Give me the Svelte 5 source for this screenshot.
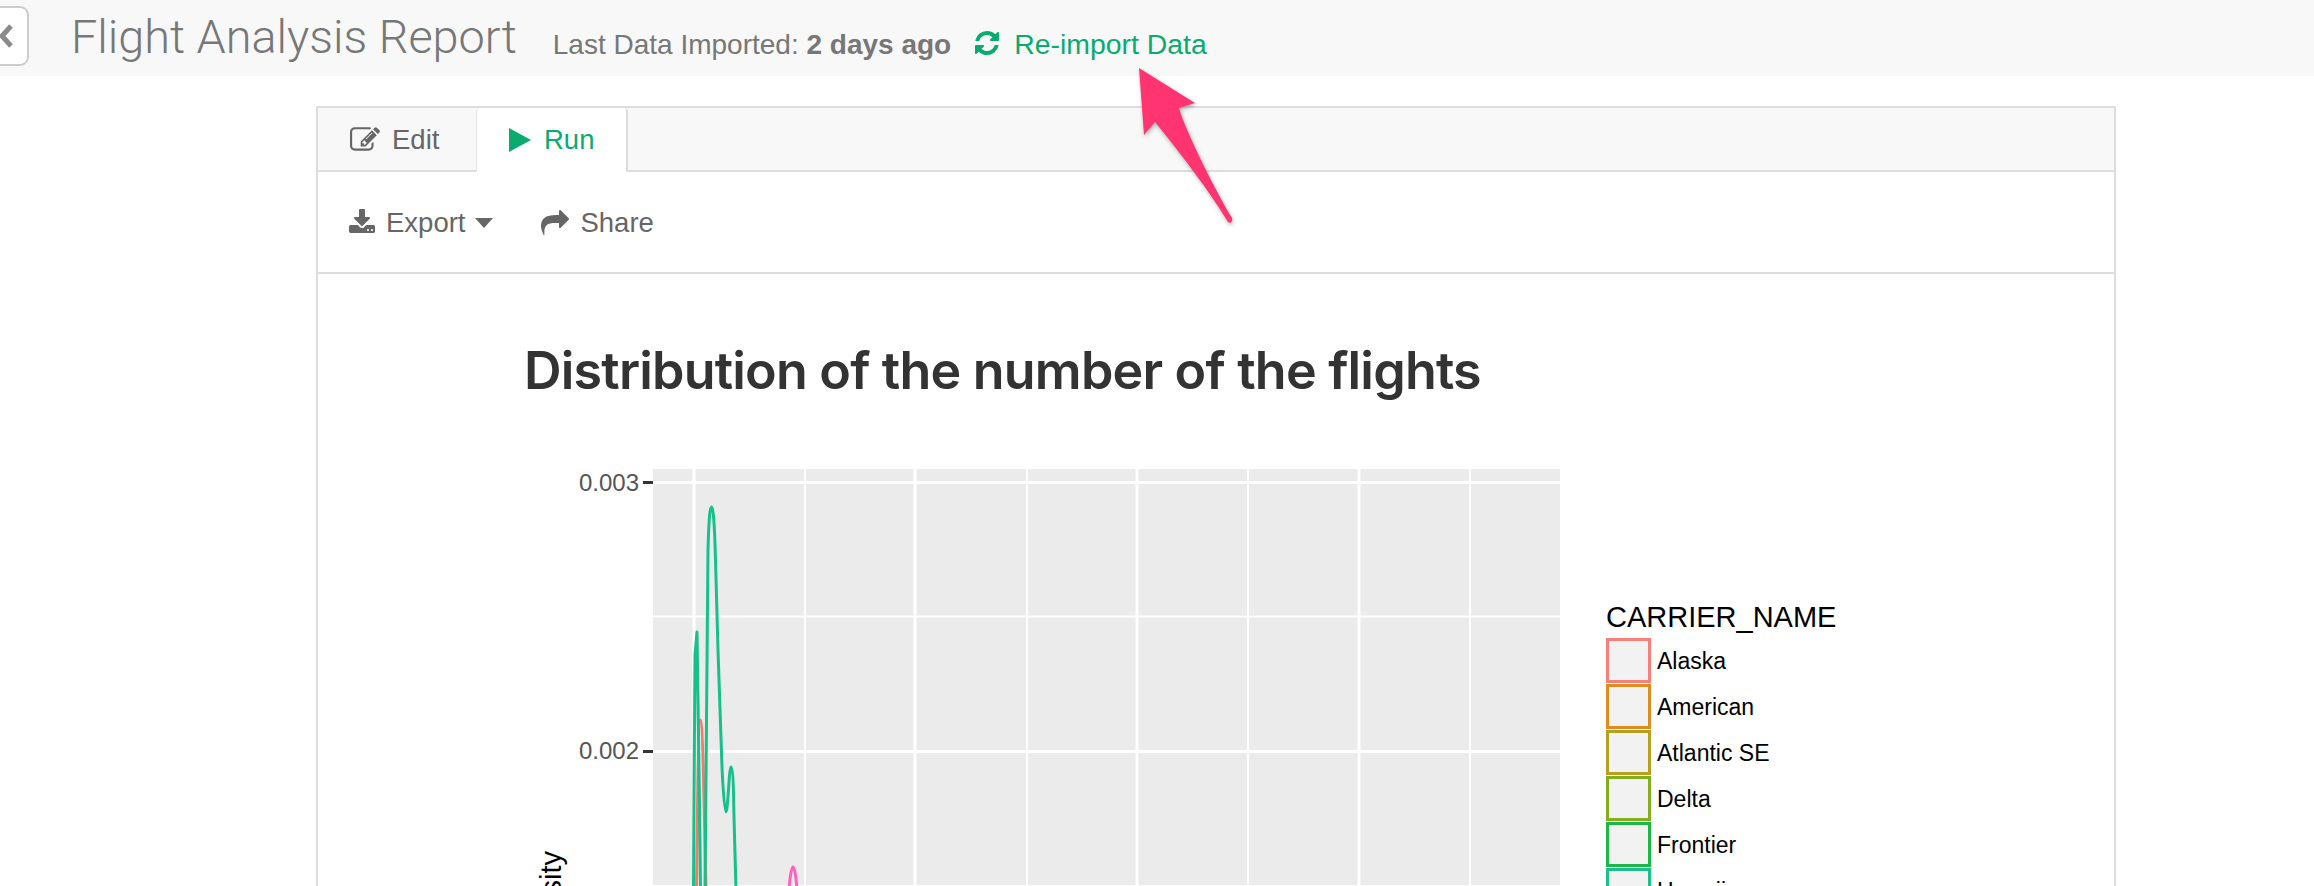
<script>
  const majorX = [694, 915, 1137, 1359];
  const minorX = [805, 1027, 1248, 1470];
  const legend = [
    { name: 'Alaska', color: '#f8807a' },
    { name: 'American', color: '#e08b20' },
    { name: 'Atlantic SE', color: '#b79f20' },
    { name: 'Delta', color: '#84ae20' },
    { name: 'Frontier', color: '#1cb845' },
    { name: 'Hawaiian', color: '#1cc08b' }
  ];
</script>

<div class="page">
  <header class="top">
    <button class="back" aria-label="Back">
      <svg viewBox="0 0 14 24" width="14" height="24"><path d="M12 2 3 12l9 10" fill="none" stroke="#8a8a8a" stroke-width="5"/></svg>
    </button>
    <h1>Flight Analysis Report</h1>
    <span class="imported">Last Data Imported: <b>2 days ago</b></span>
    <a class="reimport" href="#top">
      <svg viewBox="0 0 1536 1536" width="24" height="24"><path fill="currentColor" d="M1511 928q0 5-1 7-64 268-268 434.500t-478 166.500q-146 0-282.500-55t-243.500-157l-129 129q-19 19-45 19t-45-19-19-45v-448q0-26 19-45t45-19h448q26 0 45 19t19 45-19 45l-137 137q71 66 161 102t187 36q134 0 250-65t186-179q11-17 53-117 8-23 30-23h192q13 0 22.500 9.500t9.500 22.500zm25-800v448q0 26-19 45t-45 19h-448q-26 0-45-19t-19-45 19-45l138-138q-148-137-349-137-134 0-250 65t-186 179q-11 17-53 117-8 23-30 23h-199q-13 0-22.500-9.500t-9.500-22.500v-7q65-268 270-434.500t480-166.500q146 0 284 55.500t245 156.500l130-129q19-19 45-19t45 19 19 45z"/></svg>
      <span>Re-import Data</span>
    </a>
  </header>

  <section class="card">
    <nav class="tabs">
      <div class="tab edit">
        <svg viewBox="0 0 1792 1792" width="30" height="30"><path fill="currentColor" d="M888 1184l116-116-152-152-116 116v56h96v96h56zm440-720q-16-16-33 1l-350 350q-17 17-1 33t33-1l350-350q17-17 1-33zm80 594v190q0 119-84.500 203.500t-203.500 84.500h-832q-119 0-203.500-84.500t-84.500-203.500v-832q0-119 84.500-203.500t203.500-84.500h832q63 0 117 25 15 7 18 23 3 17-9 29l-49 49q-14 14-32 8-23-6-45-6h-832q-66 0-113 47t-47 113v832q0 66 47 113t113 47h832q66 0 113-47t47-113v-126q0-13 9-22l64-64q15-15 35-7t20 29zm-96-738l288 288-672 672h-288v-288zm444 132l-92 92-288-288 92-92q28-28 68-28t68 28l152 152q28 28 28 68t-28 68z"/></svg>
        <span>Edit</span>
      </div>
      <div class="tab run">
        <svg viewBox="0 0 22 24" width="22" height="24"><path fill="currentColor" d="M0 0 22 12 0 24z"/></svg>
        <span>Run</span>
      </div>
    </nav>

    <div class="toolbar">
      <div class="action export">
        <svg viewBox="0 0 1792 1792" width="28" height="28"><path fill="currentColor" d="M1344 1344q0-26-19-45t-45-19-45 19-19 45 19 45 45 19 45-19 19-45zm256 0q0-26-19-45t-45-19-45 19-19 45 19 45 45 19 45-19 19-45zm128-224v320q0 40-28 68t-68 28h-1472q-40 0-68-28t-28-68v-320q0-40 28-68t68-28h465l135 136q58 56 136 56t136-56l136-136h464q40 0 68 28t28 68zm-325-569q17 41-14 70l-448 448q-18 19-45 19t-45-19l-448-448q-31-29-14-70 17-39 59-39h256v-448q0-26 19-45t45-19h256q26 0 45 19t19 45v448h256q42 0 59 39z"/></svg>
        <span>Export</span>
        <i class="caret"></i>
      </div>
      <div class="action share">
        <svg viewBox="0 0 1792 1792" width="28" height="28"><path fill="currentColor" d="M1792 640q0 26-19 45l-512 512q-19 19-45 19t-45-19-19-45v-256h-224q-98 0-175.500 6t-154 21.500-133 42.500-105.500 69.500-80 101-48.500 138.500-17.500 181q0 55 5 123 0 6 2.500 23.500t2.500 26.500q0 15-8.500 25t-23.500 10q-16 0-28-17-7-9-13-22t-13.500-30-10.500-24q-127-285-127-451 0-199 53-333 162-403 875-403h224v-256q0-26 19-45t45-19 45 19l512 512q19 19 19 45z"/></svg>
        <span>Share</span>
      </div>
    </div>

    <div class="report">
      <h2>Distribution of the number of the flights</h2>
      <svg class="plot" viewBox="500 440 1400 446" width="1400" height="446">
        <rect x="653" y="469" width="907" height="416" fill="#ebebeb"/>
        {#each [616.5] as y}
          <line x1="653" x2="1560" y1={y} y2={y} stroke="#fff" stroke-width="2"/>
        {/each}
        {#each minorX as x}
          <line x1={x} x2={x} y1="469" y2="885" stroke="#fff" stroke-width="2"/>
        {/each}
        {#each [482.5, 751.5] as y}
          <line x1="653" x2="1560" y1={y} y2={y} stroke="#fff" stroke-width="3"/>
          <line x1="643" x2="653" y1={y} y2={y} stroke="#333" stroke-width="3"/>
        {/each}
        {#each majorX as x}
          <line x1={x} x2={x} y1="469" y2="885" stroke="#fff" stroke-width="3"/>
        {/each}

        <text class="tick" x="639" y="491">0.003</text>
        <text class="tick" x="639" y="759">0.002</text>
        <text class="axis" transform="translate(561 851) rotate(-90)">density</text>

        <path class="curve" stroke="#f8766d" d="M696.500 890C697.500 800 698.500 720 700.500 720C702.500 720 704 800 706 890"/>
        <path class="curve" stroke="#ff61bc" d="M789 890C790 875 791.500 867 793 867C794.500 867 796 875 797 890"/>
        <path class="curve" stroke="#16c08b" d="M693.500 890C694 800 694.500 680 695 655L697 632C698 680 699.500 800 700.500 890"/>
        <path class="curve" stroke="#16c08b" d="M705 890C706 720 707 600 708 550C709 515 710 507 711.600 507C713 507 714.500 520 715.500 560C717 620 720 720 722 767C723 790 724.500 812 726 812C728 812 729 767 731 767C733 767 733.500 790 734 817L736 890"/>

        <text class="legend-title" x="1606" y="627">CARRIER_NAME</text>
        {#each legend as item, i}
          <rect x="1607.500" y={639.5 + i * 46} width="42" height="42" fill="#f2f2f2" stroke={item.color} stroke-width="3"/>
          <text class="legend-label" x="1657" y={669 + i * 46}>{item.name}</text>
        {/each}
      </svg>
    </div>
  </section>

  <svg class="arrow" viewBox="0 0 130 190" width="130" height="190" aria-hidden="true">
    <path fill="#ff3470" d="M9 8 65 43 49 48C55 70 85 130 102 158C103 162 100 164 98 162C85 140 60 105 25 62L14 75Z"/>
  </svg>
</div>

<style>
  :global(html), :global(body) {
    margin: 0;
    background: #fff;
    overflow: hidden;
  }

  .page {
    position: relative;
    width: 2314px;
    height: 886px;
    overflow: hidden;
    font-family: "Liberation Sans", Arial, sans-serif;
  }

  .top {
    display: flex;
    align-items: center;
    height: 76px;
    background: #f8f8f8;
  }

  .back {
    display: flex;
    align-items: center;
    justify-content: flex-end;
    box-sizing: border-box;
    width: 60px;
    height: 60px;
    margin: -5px 0 0 -31px;
    padding: 0 14px 0 0;
    background: #fff;
    border: 2px solid #ccc;
    border-radius: 9px;
  }

  h1 {
    margin: -2px 0 0 42px;
    font-family: Roboto, sans-serif;
    font-size: 46.800px;
    font-weight: 300;
    color: #777;
    white-space: nowrap;
  }

  .imported {
    margin: 13px 0 0 36px;
    font-size: 28px;
    color: #777;
    white-space: nowrap;
  }

  .reimport {
    display: flex;
    align-items: center;
    gap: 15px;
    margin: 12px 0 0 24px;
    font-size: 28.400px;
    color: #0aab6e;
    text-decoration: none;
  }

  .reimport svg {
    margin-top: -2px;
  }

  .card {
    box-sizing: border-box;
    width: 1800px;
    height: 900px;
    margin: 30px 0 0 316px;
    border: 2px solid #ddd;
  }

  .tabs {
    display: flex;
    height: 62px;
    background: #f8f8f8;
    border-bottom: 2px solid #ddd;
  }

  .tab {
    display: flex;
    align-items: center;
    box-sizing: border-box;
    height: 64px;
    font-size: 27.500px;
  }

  .edit {
    width: 158px;
    gap: 12px;
    padding-left: 32px;
    color: #666;
  }

  .run {
    width: 152px;
    gap: 13px;
    padding-left: 32px;
    color: #0aab6e;
    background: #fff;
    border-left: 1px solid #e4e4e4;
    border-right: 2px solid #ddd;
    border-radius: 4px 4px 0 0;
  }

  .toolbar {
    display: flex;
    align-items: center;
    height: 100px;
    padding-left: 30px;
    border-bottom: 2px solid #ddd;
    color: #666;
    font-size: 27.500px;
  }

  .action {
    display: flex;
    align-items: center;
    padding-top: 2px;
  }

  .export {
    gap: 10px;
  }

  .share {
    gap: 11px;
    margin-left: 48px;
  }

  .caret {
    width: 0;
    height: 0;
    border-left: 9px solid transparent;
    border-right: 9px solid transparent;
    border-top: 10px solid #666;
  }

  .report {
    padding-left: 206px;
  }

  h2 {
    margin: 0;
    padding-top: 67px;
    height: 99px;
    font-family: Inter, sans-serif;
    font-size: 52px;
    font-weight: 600;
    letter-spacing: -0.8px;
    line-height: 60px;
    color: #333;
    white-space: nowrap;
  }

  .plot {
    display: block;
    margin-left: -24px;
  }

  .tick {
    font-size: 24px;
    fill: #555;
    text-anchor: end;
  }

  .axis {
    font-size: 29px;
    fill: #000;
    text-anchor: end;
  }

  .curve {
    fill: none;
    stroke-width: 3;
    stroke-linejoin: round;
  }

  .legend-title {
    font-size: 29px;
    fill: #000;
  }

  .legend-label {
    font-size: 23px;
    fill: #000;
  }

  .arrow {
    position: absolute;
    left: 1130px;
    top: 60px;
    filter: drop-shadow(1px 2px 2px rgba(0, 0, 0, 0.3));
  }
</style>
